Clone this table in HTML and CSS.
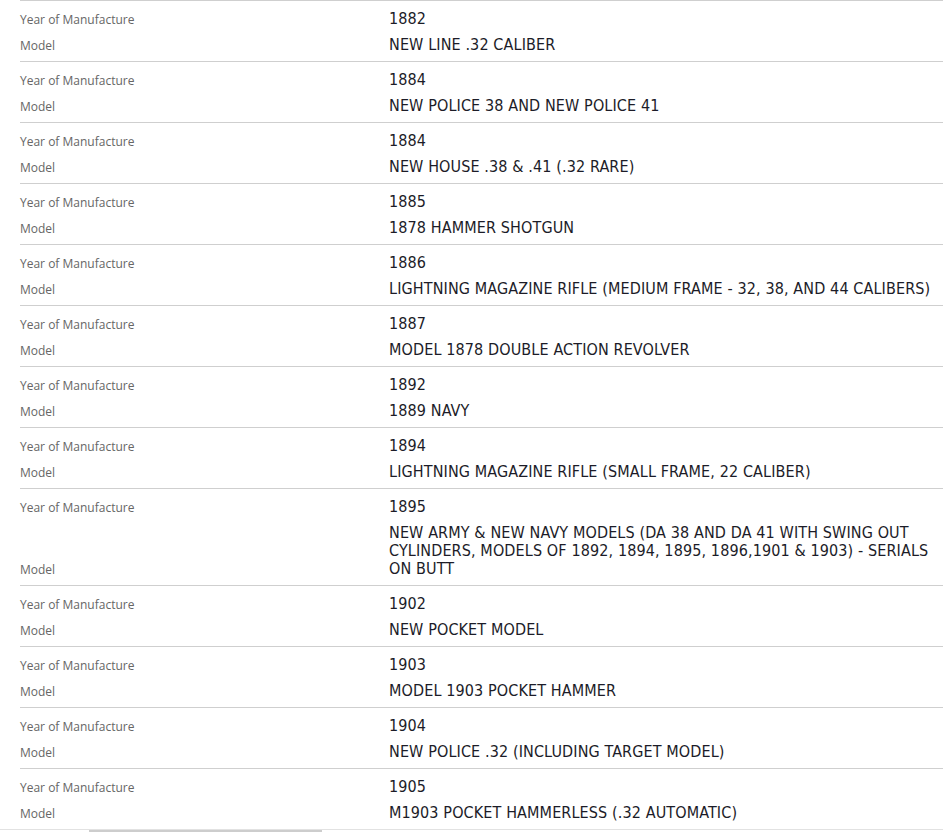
FILE: index.html
```html
<!DOCTYPE html>
<html>
  <head>
    <meta charset="UTF-8">
    <title>Models by Year</title>
    <link rel="stylesheet" href="styles.css">
  </head>
  <body>
    <div class="spec-list">
      <div class="spec-row">
        <div class="spec-label">Year of Manufacture</div><div class="spec-value">1882</div>
        <div class="spec-label">Model</div><div class="spec-value">NEW LINE .32 CALIBER</div>
      </div>
      <div class="spec-row">
        <div class="spec-label">Year of Manufacture</div><div class="spec-value">1884</div>
        <div class="spec-label">Model</div><div class="spec-value">NEW POLICE 38 AND NEW POLICE 41</div>
      </div>
      <div class="spec-row">
        <div class="spec-label">Year of Manufacture</div><div class="spec-value">1884</div>
        <div class="spec-label">Model</div><div class="spec-value">NEW HOUSE .38 &amp; .41 (.32 RARE)</div>
      </div>
      <div class="spec-row">
        <div class="spec-label">Year of Manufacture</div><div class="spec-value">1885</div>
        <div class="spec-label">Model</div><div class="spec-value">1878 HAMMER SHOTGUN</div>
      </div>
      <div class="spec-row">
        <div class="spec-label">Year of Manufacture</div><div class="spec-value">1886</div>
        <div class="spec-label">Model</div><div class="spec-value">LIGHTNING MAGAZINE RIFLE (MEDIUM FRAME - 32, 38, AND 44 CALIBERS)</div>
      </div>
      <div class="spec-row">
        <div class="spec-label">Year of Manufacture</div><div class="spec-value">1887</div>
        <div class="spec-label">Model</div><div class="spec-value">MODEL 1878 DOUBLE ACTION REVOLVER</div>
      </div>
      <div class="spec-row">
        <div class="spec-label">Year of Manufacture</div><div class="spec-value">1892</div>
        <div class="spec-label">Model</div><div class="spec-value">1889 NAVY</div>
      </div>
      <div class="spec-row">
        <div class="spec-label">Year of Manufacture</div><div class="spec-value">1894</div>
        <div class="spec-label">Model</div><div class="spec-value">LIGHTNING MAGAZINE RIFLE (SMALL FRAME, 22 CALIBER)</div>
      </div>
      <div class="spec-row">
        <div class="spec-label">Year of Manufacture</div><div class="spec-value">1895</div>
        <div class="spec-label">Model</div><div class="spec-value">NEW ARMY &amp; NEW NAVY MODELS (DA 38 AND DA 41 WITH SWING OUT CYLINDERS, MODELS OF 1892, 1894, 1895, 1896,1901 &amp; 1903) - SERIALS ON BUTT</div>
      </div>
      <div class="spec-row">
        <div class="spec-label">Year of Manufacture</div><div class="spec-value">1902</div>
        <div class="spec-label">Model</div><div class="spec-value">NEW POCKET MODEL</div>
      </div>
      <div class="spec-row">
        <div class="spec-label">Year of Manufacture</div><div class="spec-value">1903</div>
        <div class="spec-label">Model</div><div class="spec-value">MODEL 1903 POCKET HAMMER</div>
      </div>
      <div class="spec-row">
        <div class="spec-label">Year of Manufacture</div><div class="spec-value">1904</div>
        <div class="spec-label">Model</div><div class="spec-value">NEW POLICE .32 (INCLUDING TARGET MODEL)</div>
      </div>
      <div class="spec-row">
        <div class="spec-label">Year of Manufacture</div><div class="spec-value">1905</div>
        <div class="spec-label">Model</div><div class="spec-value">M1903 POCKET HAMMERLESS (.32 AUTOMATIC)</div>
      </div>
    </div>
    <!-- horizontal scroll track along the bottom -->
    <div class="scroll-track">
      <div class="scroll-thumb"></div>
    </div>
  </body>
</html>
```

FILE: styles.css
```css
* {
  box-sizing: border-box;
}
body {
  margin: 0;
  background: #fff;
  overflow: hidden;
}
/* List of year / model pairs */
.spec-list {
  margin-left: 20px;
}
.spec-row {
  display: grid;
  grid-template-columns: 369px 554px;
  align-items: end;
  border-top: 1px solid #cfcfcf;
  padding: 5px 0 3px;
}
.spec-label,
.spec-value {
  padding: 4px 0;
  line-height: 18px;
}
.spec-label {
  font-family: "Open Sans", sans-serif;
  font-size: 12px;
  color: #666;
  padding-bottom: 3px;
}
.spec-value {
  font-family: "DejaVu Sans Condensed", "DejaVu Sans", sans-serif;
  font-size: 16px;
  letter-spacing: 0.12px;
  color: #1c1c28;
}
/* Scrollbar strip */
.scroll-track {
  border-top: 1px solid #e2e2e2;
  height: 17px;
  padding-left: 89px;
}
.scroll-thumb {
  width: 233px;
  height: 100%;
  background: #cdcdcd;
}
```
